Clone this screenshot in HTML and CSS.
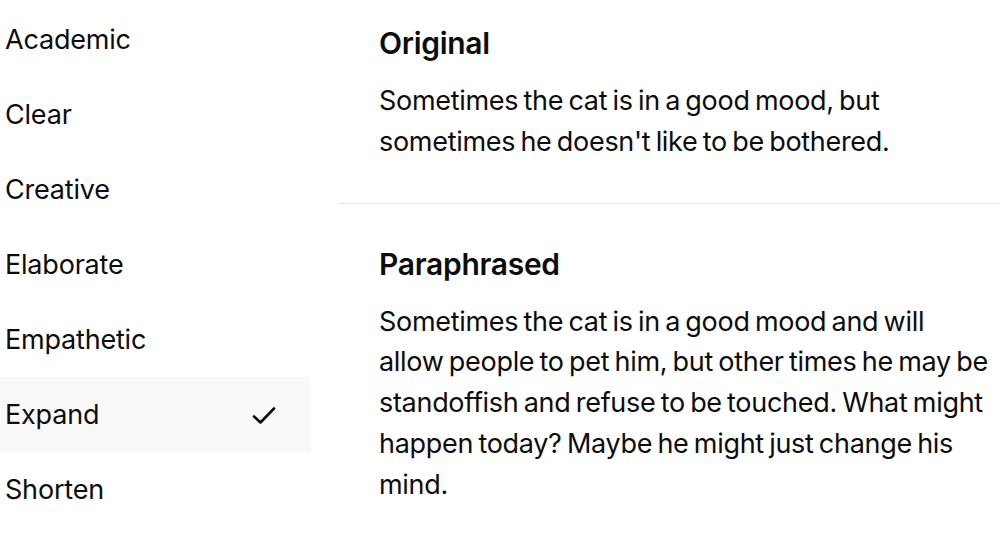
FILE: index.html
```html
<!DOCTYPE html>
<html lang="en">
<head>
<meta charset="utf-8">
<link rel="stylesheet" href="styles.css">
</head>
<body>
<div class="page">
  <ul class="menu">
    <li class="item">Academic</li>
    <li class="item">Clear</li>
    <li class="item">Creative</li>
    <li class="item">Elaborate</li>
    <li class="item">Empathetic</li>
    <li class="item selected">Expand
      <svg class="check" width="26" height="22" viewBox="0 0 26 22"><path d="M3 12.5 L9.5 18.5 L23 4.5" fill="none" stroke="#0d0d0d" stroke-width="2.6" stroke-linecap="round" stroke-linejoin="round"/></svg>
    </li>
    <li class="item">Shorten</li>
  </ul>
  <div class="content">
    <section class="block first">
      <h2 class="title">Original</h2>
      <p class="text">Sometimes the cat is in a good mood, but sometimes he doesn't like to be bothered.</p>
    </section>
    <section class="block second">
      <h2 class="title">Paraphrased</h2>
      <p class="text">Sometimes the cat is in a good mood and will allow people to pet him, but other times he may be standoffish and refuse to be touched. What might happen today? Maybe he might just change his mind.</p>
    </section>
  </div>
</div>
</body>
</html>
```
FILE: styles.css
```css
* { box-sizing: border-box; }
html, body { margin: 0; padding: 0; background: #ffffff; }
body {
  font-family: Inter, "Liberation Sans", sans-serif;
  color: #0d0d0d;
  width: 1000px;
  height: 542px;
  overflow: hidden;
}
.page {
  display: flex;
  gap: 27px;
}
.menu {
  list-style: none;
  margin: 2px 0 0 0;
  padding: 0;
  width: 311px;
  flex: none;
}
.item {
  height: 75px;
  display: flex;
  align-items: center;
  justify-content: space-between;
  padding: 0 34px 0 5px;
  font-size: 27px;
  letter-spacing: -0.2px;
}
.item.selected {
  background: #f9f9f9;
}
.check { display: block; }
.content {
  flex: 1;
  display: flex;
  flex-direction: column;
}
.block {
  padding: 0 0 0 41px;
}
.block.first {
  border-bottom: 1.5px solid #e6e6ee;
  padding-top: 23px;
  padding-bottom: 40px;
}
.block.second {
  padding-top: 40px;
}
.title {
  margin: 0 0 18px 0;
  font-size: 30px;
  font-weight: 600;
  line-height: 40px;
  letter-spacing: -0.3px;
}
.text {
  margin: 0;
  max-width: 614px;
  font-size: 27px;
  line-height: 40.75px;
  letter-spacing: -0.3px;
  word-spacing: -2px;
}
```
